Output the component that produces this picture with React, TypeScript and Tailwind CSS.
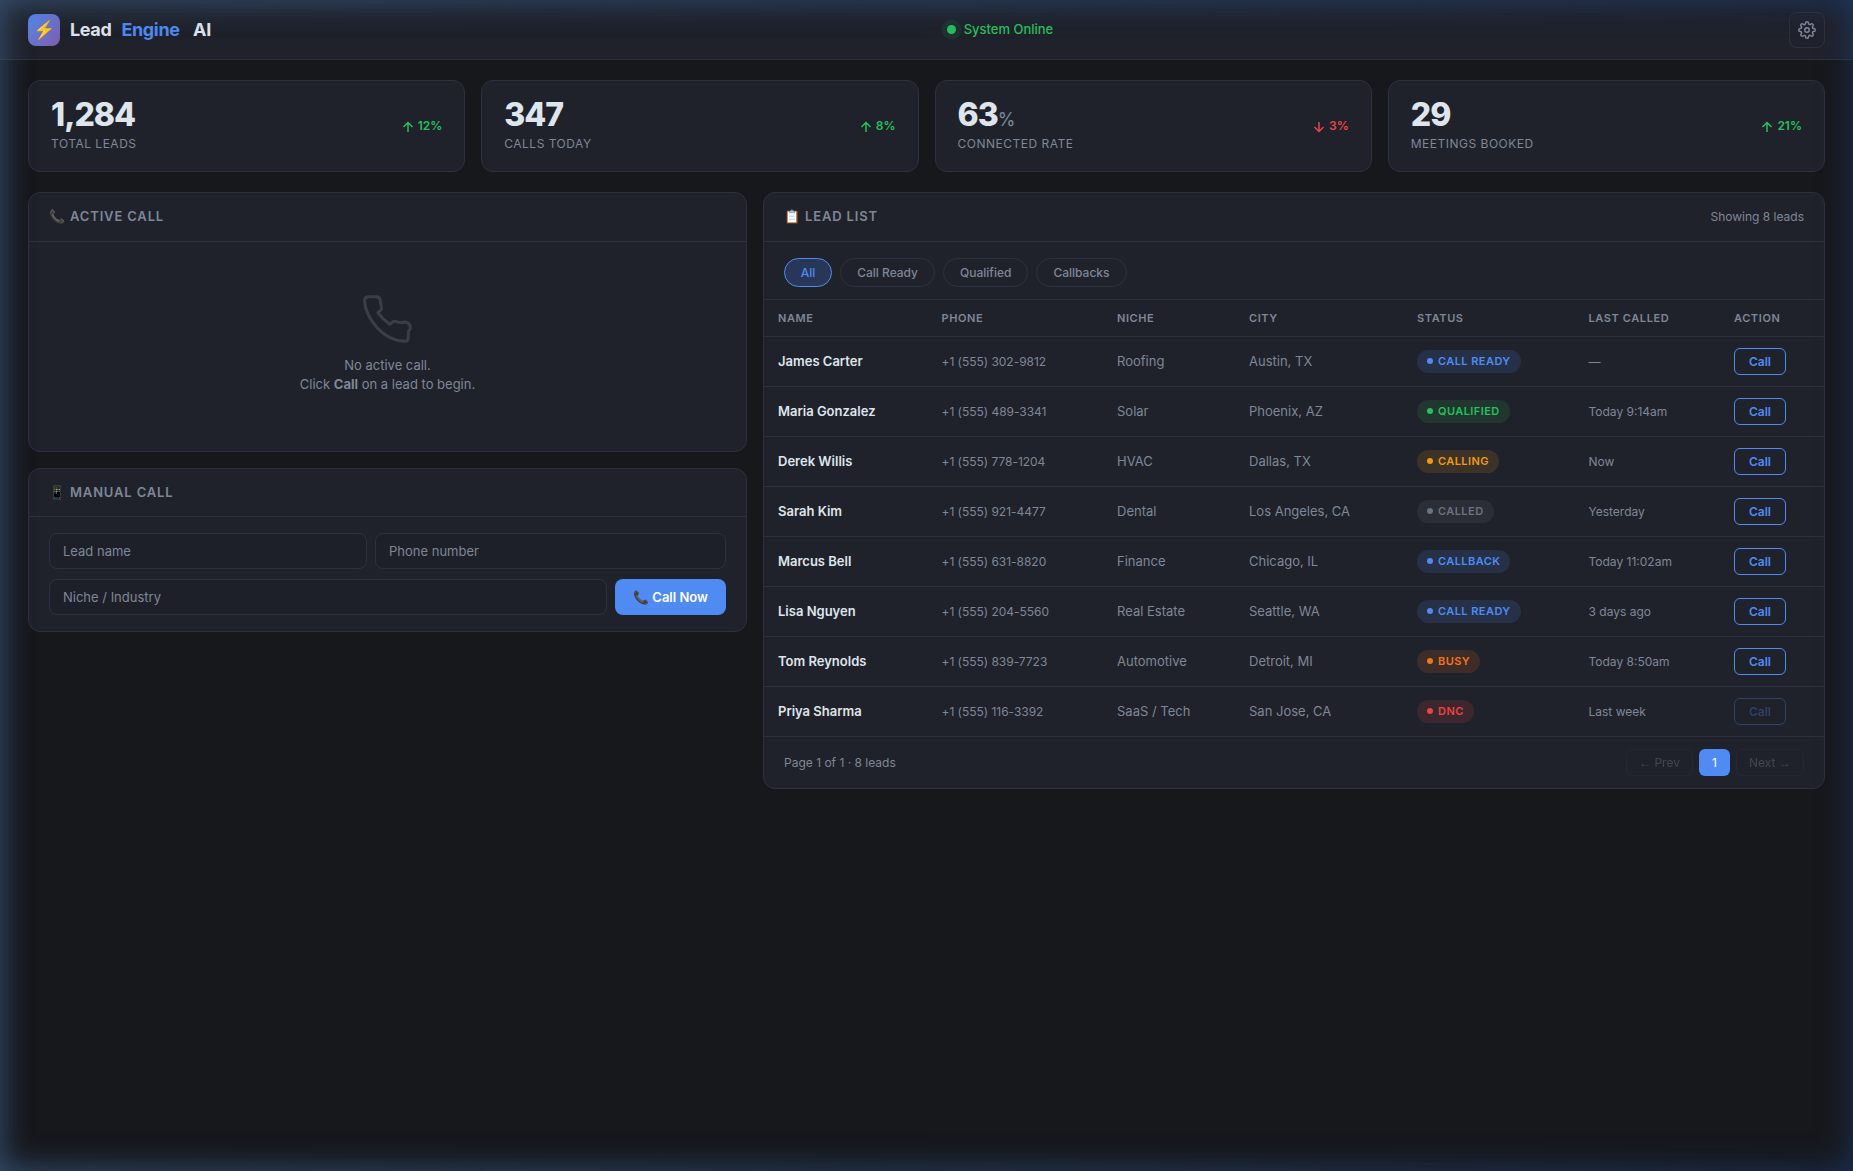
import clsx from 'clsx'
import { FiSettings } from 'react-icons/fi'

type Status = 'Call Ready' | 'Qualified' | 'Calling' | 'Called' | 'Callback' | 'Busy' | 'DNC'

interface Lead {
  name: string
  phone: string
  niche: string
  city: string
  status: Status
  last: string
}

const STATS = [
  { value: '1,284', label: 'Total Leads', delta: '12%', up: true },
  { value: '347', label: 'Calls Today', delta: '8%', up: true },
  { value: '63', unit: '%', label: 'Connected Rate', delta: '3%', up: false },
  { value: '29', label: 'Meetings Booked', delta: '21%', up: true },
]

const LEADS: Lead[] = [
  { name: 'James Carter', phone: '+1 (555) 302-9812', niche: 'Roofing', city: 'Austin, TX', status: 'Call Ready', last: '—' },
  { name: 'Maria Gonzalez', phone: '+1 (555) 489-3341', niche: 'Solar', city: 'Phoenix, AZ', status: 'Qualified', last: 'Today 9:14am' },
  { name: 'Derek Willis', phone: '+1 (555) 778-1204', niche: 'HVAC', city: 'Dallas, TX', status: 'Calling', last: 'Now' },
  { name: 'Sarah Kim', phone: '+1 (555) 921-4477', niche: 'Dental', city: 'Los Angeles, CA', status: 'Called', last: 'Yesterday' },
  { name: 'Marcus Bell', phone: '+1 (555) 631-8820', niche: 'Finance', city: 'Chicago, IL', status: 'Callback', last: 'Today 11:02am' },
  { name: 'Lisa Nguyen', phone: '+1 (555) 204-5560', niche: 'Real Estate', city: 'Seattle, WA', status: 'Call Ready', last: '3 days ago' },
  { name: 'Tom Reynolds', phone: '+1 (555) 839-7723', niche: 'Automotive', city: 'Detroit, MI', status: 'Busy', last: 'Today 8:50am' },
  { name: 'Priya Sharma', phone: '+1 (555) 116-3392', niche: 'SaaS / Tech', city: 'San Jose, CA', status: 'DNC', last: 'Last week' },
]

const STATUS_STYLE: Record<Status, string> = {
  'Call Ready': 'bg-[#263147] text-[#4f8bf2]',
  Qualified: 'bg-[#20362f] text-[#26c05c]',
  Calling: 'bg-[#3c3228] text-[#ef9a10]',
  Called: 'bg-[#2b2e37] text-[#6b7280]',
  Callback: 'bg-[#263147] text-[#4f8bf2]',
  Busy: 'bg-[#3d2d29] text-[#f3731a]',
  DNC: 'bg-[#3c272f] text-[#ea4444]',
}

const FILTERS = ['All', 'Call Ready', 'Qualified', 'Callbacks']

const COLUMNS = [
  { label: 'Name', width: 'w-[163.5px]' },
  { label: 'Phone', width: 'w-[175.5px]' },
  { label: 'Niche', width: 'w-[132px]' },
  { label: 'City', width: 'w-[168px]' },
  { label: 'Status', width: 'w-[171.5px]' },
  { label: 'Last Called', width: 'w-[145.5px]' },
  { label: 'Action', width: '' },
]

const PANEL = 'rounded-xl border border-[#2d3040] bg-[#20222b]'
const INPUT =
  'h-[36px] min-w-0 rounded-lg border border-[#2d3040] bg-[#1e2029] px-[13px] text-[13px] text-[#dfe5ec] placeholder:text-[#7e8797] outline-none'

function PanelHeader({ icon, title, note, className }: { icon: string; title: string; note?: string; className?: string }) {
  return (
    <div className={clsx('flex items-center justify-between border-b border-[#2d3040] px-5', className ?? 'h-[48.5px]')}>
      <h2 className="text-[13px] font-semibold uppercase tracking-[0.85px] text-[#7e8797]">
        {icon} {title}
      </h2>
      {note && <span className="text-xs text-[#7e8797]">{note}</span>}
    </div>
  )
}

function Header() {
  return (
    <header className="flex h-[60px] items-center justify-between border-b border-[#2d3040] bg-[#20222b] px-7">
      <div className="flex items-center gap-2.5 text-lg font-bold tracking-[-0.36px] text-[#dfe5ec]">
        <div className="flex size-8 items-center justify-center rounded-lg bg-linear-135 from-[#4f8bf2] to-[#7c5cab] text-lg">
          ⚡
        </div>
        <span>Lead</span>
        <span className="text-[#4f8bf2]">Engine</span>
        <span className="ml-[3.5px]">AI</span>
      </div>
      <div className="flex items-center gap-2 text-[13px] font-medium text-[#26c05c]">
        <span className="size-[9px] rounded-full bg-[#26c05c] shadow-[0_0_0_5.5px_rgba(34,197,94,0.1)]" />
        System Online
      </div>
      <button className="flex size-9 items-center justify-center rounded-lg border border-[#2d3040] text-[#7e8797]">
        <FiSettings size={18} />
      </button>
    </header>
  )
}

function StatCard({ value, unit, label, delta, up }: { value: string; unit?: string; label: string; delta: string; up: boolean }) {
  return (
    <div className={clsx(PANEL, 'flex h-[92px] items-start justify-between px-[22px] pt-[18px]')}>
      <div>
        <div className="h-8 text-[32px] leading-[32px] font-extrabold tracking-[-1px] text-[#dfe5ec]">
          {value}
          {unit && <span className="text-lg leading-none font-normal text-[#7e8797]">{unit}</span>}
        </div>
        <div className="mt-[5px] text-xs tracking-[0.5px] text-[#7e8797] uppercase">{label}</div>
      </div>
      <div className={clsx('mt-[19px] flex items-center gap-1 text-xs font-semibold', up ? 'text-[#26c05c]' : 'text-[#ea4444]')}>
        <svg width="12" height="12" viewBox="0 0 12 12" fill="none" stroke="currentColor" strokeWidth="1.5" className="mt-0.5">
          <path d={up ? 'M6 11V2M1.5 6 6 1.5 10.5 6' : 'M6 1v9M1.5 6 6 10.5 10.5 6'} />
        </svg>
        {delta}
      </div>
    </div>
  )
}

function ActiveCall() {
  return (
    <section className={clsx(PANEL, 'h-[260px]')}>
      <PanelHeader icon="📞" title="Active Call" />
      <div className="flex flex-col items-center pt-[52px] text-[13px] leading-[19px] text-[#7e8797]">
        <svg width="52" height="52" viewBox="36.5 27 156 156" fill="none" stroke="#3b3e49" strokeWidth="9" strokeLinejoin="round">
          <path d="M55 35H80Q89 35 91 45L95 68Q96 73 92 76L84 83Q98 103 120 118L127 112Q132 107 139 110Q148 113 157 113Q166 109 174 114Q183 120 181 130Q180 134 176 138L175 160Q175 169 165 169Q118 167 82 128Q46 88 44 47Q44 36 55 35Z" />
        </svg>
        <p className="mt-2.5 text-center">
          No active call.
          <br />
          Click <strong className="font-bold">Call</strong> on a lead to begin.
        </p>
      </div>
    </section>
  )
}

function ManualCall() {
  return (
    <section className={clsx(PANEL, 'h-[164px]')}>
      <PanelHeader icon="📱" title="Manual Call" className="h-12" />
      <div className="flex flex-col gap-2.5 px-5 pt-4">
        <div className="flex gap-2">
          <input className={clsx(INPUT, 'w-[318px]')} placeholder="Lead name" />
          <input className={clsx(INPUT, 'flex-1')} placeholder="Phone number" />
        </div>
        <div className="flex gap-2">
          <input className={clsx(INPUT, 'flex-1')} placeholder="Niche / Industry" />
          <button className="h-[36px] w-[111px] rounded-lg bg-[#4f8bf2] pt-px text-[13px] font-semibold text-white">📞 Call Now</button>
        </div>
      </div>
    </section>
  )
}

function LeadTable() {
  return (
    <table className="w-full table-fixed text-left text-[13px] text-[#7e8797]">
      <thead>
        <tr className="h-9 border-b border-[#2d3040]">
          {COLUMNS.map((c) => (
            <th key={c.label} className={clsx(c.width, 'px-3.5 py-0 text-[11px] font-semibold tracking-[0.6px] uppercase')}>
              {c.label}
            </th>
          ))}
        </tr>
      </thead>
      <tbody>
        {LEADS.map((lead) => (
          <tr key={lead.name} className="h-[50px] border-b border-[#2d3040]">
            <td className="px-3.5 pt-0.5 font-semibold text-[#dfe5ec]">{lead.name}</td>
            <td className="px-3.5 pt-0.5 text-xs tracking-[-0.03px]">{lead.phone}</td>
            <td className="px-3.5 pt-0.5">{lead.niche}</td>
            <td className="px-3.5 pt-0.5">{lead.city}</td>
            <td className="px-3.5">
              <span
                className={clsx(
                  'flex h-[23px] w-fit items-center gap-[5px] rounded-full px-2.5 text-[11px] font-semibold tracking-[0.44px] uppercase',
                  STATUS_STYLE[lead.status],
                )}
              >
                <span className="size-1.5 rounded-full bg-current" />
                {lead.status}
              </span>
            </td>
            <td className="px-3.5 pt-0.5 text-xs">{lead.last}</td>
            <td className="px-3.5">
              <button
                disabled={lead.status === 'DNC'}
                className="block h-[27px] w-[52px] rounded-md border border-[#4f8bf2] pt-px text-xs font-semibold text-[#4f8bf2] disabled:opacity-30"
              >
                Call
              </button>
            </td>
          </tr>
        ))}
      </tbody>
    </table>
  )
}

function LeadList() {
  return (
    <section className={clsx(PANEL, 'min-w-0')}>
      <PanelHeader icon="📋" title="Lead List" note="Showing 8 leads" />
      <div className="flex h-[58.5px] items-start gap-2 border-b border-[#2d3040] px-5 pt-4">
        {FILTERS.map((f, i) => (
          <button
            key={f}
            className={clsx(
              'h-[29px] rounded-full border pt-px text-xs font-medium',
              i === 0 ? 'border-[#4f8bf2] bg-[#283757] px-[15.8px] text-[#4f8bf2]' : 'border-[#2d3040] px-4 text-[#7e8797]',
            )}
          >
            {f}
          </button>
        ))}
      </div>
      <LeadTable />
      <div className="flex h-[51.5px] items-center justify-between px-5 text-xs text-[#7e8797]">
        <span className="pt-px">Page 1 of 1 · 8 leads</span>
        <div className="flex gap-1.5">
          <button disabled className="h-[27px] w-[67px] rounded-md border border-[#2d3040] pt-px opacity-35">
            <span className="font-['Liberation_Sans']">←</span> Prev
          </button>
          <button className="h-[27px] w-[31px] rounded-md bg-[#4f8bf2] pt-px text-white">1</button>
          <button disabled className="h-[27px] w-[68px] rounded-md border border-[#2d3040] pt-px opacity-35">
            Next <span className="font-['Liberation_Sans']">→</span>
          </button>
        </div>
      </div>
    </section>
  )
}

export default function App() {
  return (
    <div className="relative h-[1171px] overflow-hidden bg-[#17181c] font-['Inter',sans-serif]">
      <Header />
      <main className="px-7 pt-5">
        <div className="grid grid-cols-4 gap-4">
          {STATS.map((s) => (
            <StatCard key={s.label} {...s} />
          ))}
        </div>
        <div className="mt-5 grid grid-cols-[719px_1fr] items-start gap-4">
          <div className="flex flex-col gap-4">
            <ActiveCall />
            <ManualCall />
          </div>
          <LeadList />
        </div>
      </main>
      {/* edge glow, lighter towards the left */}
      <div className="pointer-events-none absolute inset-0 shadow-[inset_0_0_32px_rgba(28,75,150,0.5)]" />
      <div className="pointer-events-none absolute inset-0 mask-r-from-0% mask-r-to-100% shadow-[inset_0_0_32px_rgba(100,125,135,0.4)]" />
    </div>
  )
}
